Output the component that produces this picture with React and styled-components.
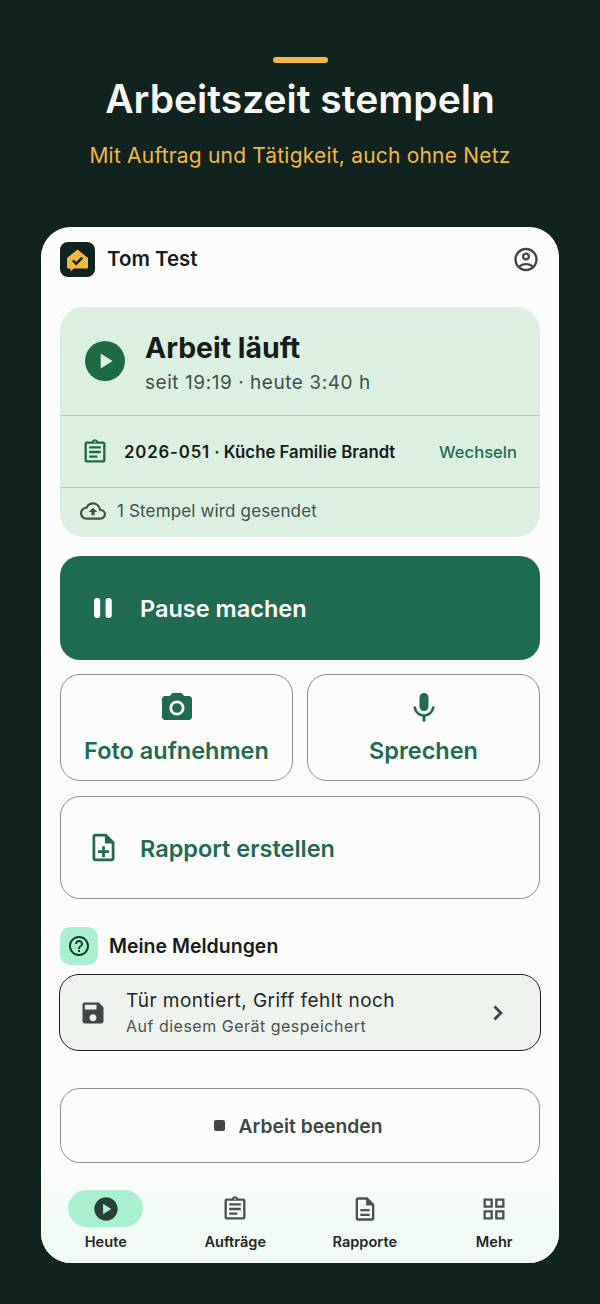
import React from 'react';
import styled, { createGlobalStyle } from 'styled-components';
import {
  MdOutlineAccountCircle,
  MdPlayArrow,
  MdOutlineAssignment,
  MdOutlineCloudUpload,
  MdPhotoCamera,
  MdMic,
  MdOutlineNoteAdd,
  MdOutlineHelpOutline,
  MdSave,
  MdPlayCircle,
  MdOutlineDescription,
  MdOutlineGridView,
} from 'react-icons/md';

const GlobalStyle = createGlobalStyle`
  html, body {
    margin: 0;
    padding: 0;
    background: #11231e;
  }
  * {
    box-sizing: border-box;
  }
`;

const Page = styled.div`
  width: 600px;
  height: 1304px;
  background: #11231e;
  font-family: Inter, "Liberation Sans", sans-serif;
  padding-top: 57px;
  overflow: hidden;
`;

const Hero = styled.header`
  display: flex;
  flex-direction: column;
  align-items: center;
  height: 170px;
`;

const HeroBar = styled.div`
  width: 55px;
  height: 6px;
  border-radius: 3px;
  background: #f2b840;
`;

const HeroTitle = styled.h1`
  margin: 13px 0 0;
  font-size: 39px;
  line-height: 46px;
  font-weight: 600;
  color: #f8f8f5;
`;

const HeroSub = styled.p`
  margin: 21px 0 0;
  font-size: 21px;
  line-height: 26px;
  font-weight: 400;
  letter-spacing: 0.2px;
  color: #f2b840;
`;

const Phone = styled.main`
  width: 518px;
  height: 1036px;
  margin: 0 auto;
  background: #fbfcfb;
  border-radius: 30px;
  overflow: hidden;
  display: flex;
  flex-direction: column;
`;

const TopBar = styled.div`
  height: 80px;
  padding: 15px 19px 0;
  display: flex;
  align-items: flex-start;
  color: #171c1a;
`;

const Logo = styled.div`
  width: 35px;
  height: 35px;
  border-radius: 8px;
  background: #11231e;
  display: flex;
  align-items: center;
  justify-content: center;
`;

const UserName = styled.div`
  margin-left: 12px;
  font-size: 20.5px;
  line-height: 34px;
  font-weight: 600;
  flex: 1;
`;

const Account = styled.div`
  width: 28px;
  height: 35px;
  display: flex;
  align-items: center;
  justify-content: center;
  font-size: 29px;
  color: #3f4844;
`;

const Content = styled.div`
  padding: 0 19px;
  display: flex;
  flex-direction: column;
`;

const StatusCard = styled.section`
  background: #dcf0e2;
  border-radius: 24px;
  height: 230px;
  display: flex;
  flex-direction: column;
`;

const StatusHead = styled.div`
  height: 108px;
  padding-left: 25px;
  display: flex;
  align-items: center;
  gap: 20px;
`;

const PlayDisc = styled.div`
  width: 40px;
  height: 40px;
  border-radius: 50%;
  background: #1d6b45;
  color: #dcf0e2;
  font-size: 26px;
  display: flex;
  align-items: center;
  justify-content: center;
`;

const StatusText = styled.div`
  padding-top: 2px;
`;

const StatusTitle = styled.div`
  font-size: 28.4px;
  line-height: 34px;
  font-weight: 700;
  color: #171c1a;
`;

const StatusSub = styled.div`
  margin-top: 7px;
  font-size: 19px;
  line-height: 22px;
  color: #40504a;
  letter-spacing: 0.55px;
`;

const StatusRow = styled.div`
  height: ${(p) => p.$height}px;
  border-top: 1px solid #b4cbbc;
  padding: 0 23px ${(p) => p.$bottom || 0}px ${(p) => p.$left}px;
  display: flex;
  align-items: center;
`;

const OrderIcon = styled.span`
  display: flex;
  font-size: 28px;
  color: #1d6b45;
  margin-right: 15px;
`;

const OrderName = styled.span`
  flex: 1;
  font-size: 16.8px;
  font-weight: 600;
  color: #171c1a;
`;

const OrderNumber = styled.span`
  letter-spacing: 0.85px;
`;

const SwitchLink = styled.span`
  font-size: 16.5px;
  font-weight: 500;
  letter-spacing: 0.05px;
  color: #1f6b52;
`;

const CloudIcon = styled.span`
  display: flex;
  font-size: 26px;
  color: #40504a;
  margin-right: 11px;
`;

const SyncText = styled.span`
  font-size: 17px;
  color: #40504a;
  letter-spacing: 0.15px;
`;

const PrimaryButton = styled.button`
  margin-top: 19px;
  height: 104px;
  border: 0;
  border-radius: 20px;
  background: #1f6b52;
  color: #fff;
  font: inherit;
  font-size: 23.5px;
  font-weight: 600;
  padding: 0 0 0 33px;
  display: flex;
  align-items: center;
  gap: 27px;
`;

const ActionGrid = styled.div`
  margin-top: 14px;
  display: grid;
  grid-template-columns: 1fr 1fr;
  gap: 14px;
`;

const TileButton = styled.button`
  height: 107px;
  background: transparent;
  border: 1px solid #8b908d;
  border-radius: 20px;
  color: #1f6b52;
  font: inherit;
  font-size: 23.5px;
  font-weight: 600;
  display: flex;
  flex-direction: column;
  align-items: center;
  padding: 15px 0 0;
`;

const TileIcon = styled.span`
  display: flex;
  font-size: 36px;
  height: 36px;
  margin-bottom: 10px;
`;

const WideButton = styled.button`
  margin-top: 15px;
  height: 103px;
  background: transparent;
  border: 1px solid #8b908d;
  border-radius: 20px;
  color: #1f6b52;
  font: inherit;
  font-size: 23.5px;
  font-weight: 600;
  padding: 1px 0 0 26px;
  display: flex;
  align-items: center;
  gap: 20px;
`;

const WideIcon = styled.span`
  display: flex;
  font-size: 33px;
  margin-top: -1px;
`;

const SectionHead = styled.div`
  margin-top: 28px;
  display: flex;
  align-items: center;
  gap: 11px;
`;

const HelpBox = styled.div`
  width: 38px;
  height: 38px;
  border-radius: 10px;
  background: #a9f0d1;
  color: #0d3b2e;
  font-size: 24px;
  display: flex;
  align-items: center;
  justify-content: center;
`;

const SectionTitle = styled.h2`
  margin: 0;
  font-size: 19.5px;
  font-weight: 600;
  color: #171c1a;
`;

const MessageCard = styled.div`
  margin: 9px -1px 0;
  height: 77px;
  border: 1.5px solid #1c201e;
  border-radius: 20px;
  background: #eef3ee;
  padding: 0 31px 0 19px;
  display: flex;
  align-items: center;
`;

const SaveIcon = styled.span`
  display: flex;
  font-size: 28px;
  color: #3f4844;
  margin-right: 19px;
`;

const MessageText = styled.div`
  flex: 1;
`;

const MessageTitle = styled.div`
  font-size: 19px;
  line-height: 24px;
  letter-spacing: 0.45px;
  color: #232826;
`;

const MessageSub = styled.div`
  margin-top: 3px;
  font-size: 16px;
  line-height: 20px;
  letter-spacing: 0.5px;
  color: #49524e;
`;

const ChevronIcon = styled.span`
  display: flex;
  color: #3f4844;
  margin-right: -3px;
`;

const EndButton = styled.button`
  margin-top: 37px;
  height: 75px;
  background: transparent;
  border: 1px solid #8b908d;
  border-radius: 20px;
  color: #3f4844;
  font: inherit;
  font-size: 19.3px;
  font-weight: 600;
  padding: 0 4px 0 0;
  display: flex;
  align-items: center;
  justify-content: center;
  gap: 14px;
`;

const StopMark = styled.span`
  width: 11px;
  height: 11px;
  border-radius: 2px;
  background: #3f4844;
`;

const BottomNav = styled.nav`
  margin-top: auto;
  height: 92px;
  background: linear-gradient(#fbfcfb, #f3fbf6 40px);
  display: grid;
  grid-template-columns: repeat(4, 1fr);
`;

const NavItem = styled.div`
  display: flex;
  flex-direction: column;
  align-items: center;
  padding-top: 19px;
`;

const NavIcon = styled.div`
  width: 75px;
  height: 37px;
  border-radius: 19px;
  background: ${(p) => (p.$active ? '#a9f0d1' : 'transparent')};
  color: ${(p) => (p.$active ? '#2a3f38' : '#49524e')};
  font-size: 28px;
  display: flex;
  align-items: center;
  justify-content: center;
`;

const NavLabel = styled.div`
  margin-top: 6px;
  font-size: 14.6px;
  line-height: 18px;
  font-weight: 600;
  color: #232826;
`;

const LogoMark = () => (
  <svg width="25" height="25" viewBox="0 0 25 25">
    <path
      d="M12.5 2.5 23 11v9.5a1 1 0 0 1-1 1H9l-3.5 3v-3H3a1 1 0 0 1-1-1V11z"
      fill="#f2b840"
    />
    <path d="m7.8 13.4 3.4 3.3 6-6" fill="none" stroke="#11231e" strokeWidth="2.4" />
  </svg>
);

const PauseMark = () => (
  <svg width="20" height="22" viewBox="0 0 20 22">
    <rect x="1" y="1" width="6.2" height="20" rx="3" fill="#fff" />
    <rect x="12.6" y="1" width="6.2" height="20" rx="3" fill="#fff" />
  </svg>
);

const ChevronMark = () => (
  <svg width="28" height="28" viewBox="0 0 24 24">
    <path d="M9 6.5 14.5 12 9 17.5" fill="none" stroke="currentColor" strokeWidth="2.4" />
  </svg>
);

const navItems = [
  { label: 'Heute', icon: <MdPlayCircle />, active: true },
  { label: 'Aufträge', icon: <MdOutlineAssignment /> },
  { label: 'Rapporte', icon: <MdOutlineDescription /> },
  { label: 'Mehr', icon: <MdOutlineGridView /> },
];

const App = () => (
  <Page>
    <GlobalStyle />
    <Hero>
      <HeroBar />
      <HeroTitle>Arbeitszeit stempeln</HeroTitle>
      <HeroSub>Mit Auftrag und Tätigkeit, auch ohne Netz</HeroSub>
    </Hero>
    <Phone>
      <TopBar>
        <Logo>
          <LogoMark />
        </Logo>
        <UserName>Tom Test</UserName>
        <Account>
          <MdOutlineAccountCircle />
        </Account>
      </TopBar>
      <Content>
        <StatusCard>
          <StatusHead>
            <PlayDisc>
              <MdPlayArrow />
            </PlayDisc>
            <StatusText>
              <StatusTitle>Arbeit läuft</StatusTitle>
              <StatusSub>seit 19:19 · heute 3:40 h</StatusSub>
            </StatusText>
          </StatusHead>
          <StatusRow $height={72} $left={21}>
            <OrderIcon>
              <MdOutlineAssignment />
            </OrderIcon>
            <OrderName>
              <OrderNumber>2026-051</OrderNumber> · Küche Familie Brandt
            </OrderName>
            <SwitchLink>Wechseln</SwitchLink>
          </StatusRow>
          <StatusRow $height={50} $left={20} $bottom={3}>
            <CloudIcon>
              <MdOutlineCloudUpload />
            </CloudIcon>
            <SyncText>1 Stempel wird gesendet</SyncText>
          </StatusRow>
        </StatusCard>
        <PrimaryButton>
          <PauseMark />
          Pause machen
        </PrimaryButton>
        <ActionGrid>
          <TileButton>
            <TileIcon>
              <MdPhotoCamera />
            </TileIcon>
            Foto aufnehmen
          </TileButton>
          <TileButton>
            <TileIcon>
              <MdMic />
            </TileIcon>
            Sprechen
          </TileButton>
        </ActionGrid>
        <WideButton>
          <WideIcon>
            <MdOutlineNoteAdd />
          </WideIcon>
          Rapport erstellen
        </WideButton>
        <SectionHead>
          <HelpBox>
            <MdOutlineHelpOutline />
          </HelpBox>
          <SectionTitle>Meine Meldungen</SectionTitle>
        </SectionHead>
        <MessageCard>
          <SaveIcon>
            <MdSave />
          </SaveIcon>
          <MessageText>
            <MessageTitle>Tür montiert, Griff fehlt noch</MessageTitle>
            <MessageSub>Auf diesem Gerät gespeichert</MessageSub>
          </MessageText>
          <ChevronIcon>
            <ChevronMark />
          </ChevronIcon>
        </MessageCard>
        <EndButton>
          <StopMark />
          Arbeit beenden
        </EndButton>
      </Content>
      <BottomNav>
        {navItems.map((item) => (
          <NavItem key={item.label}>
            <NavIcon $active={item.active}>{item.icon}</NavIcon>
            <NavLabel>{item.label}</NavLabel>
          </NavItem>
        ))}
      </BottomNav>
    </Phone>
  </Page>
);

export default App;
